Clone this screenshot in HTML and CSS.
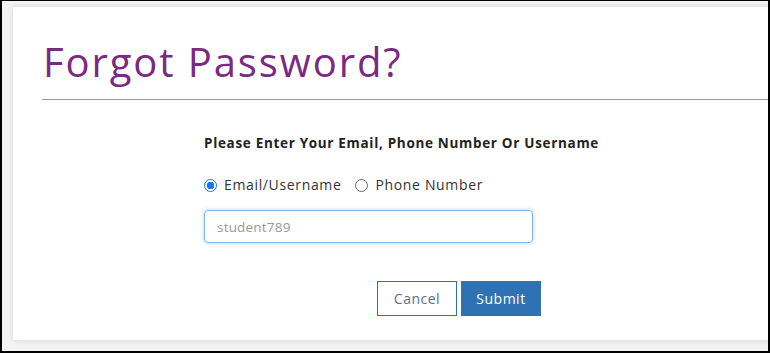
FILE: index.html
```html
<!DOCTYPE html>
<html>
<head>
<meta charset="utf-8">
<link rel="stylesheet" href="styles.css">
</head>
<body>
<div class="frame">
  <div class="card">
    <h1 class="title">Forgot Password?</h1>
    <hr class="rule">
    <form class="form">
      <div class="label">Please Enter Your Email, Phone Number Or Username</div>
      <div class="radios">
        <label class="radio"><span class="dot checked"></span>Email/Username</label>
        <label class="radio"><span class="dot"></span>Phone Number</label>
      </div>
      <div class="input"><span class="placeholder">student789</span></div>
      <div class="actions">
        <button type="button" class="btn cancel">Cancel</button>
        <button type="button" class="btn submit">Submit</button>
      </div>
    </form>
  </div>
</div>
</body>
</html>
```
FILE: styles.css
```css
html, body { margin: 0; padding: 0; }
body { width: 770px; height: 353px; overflow: hidden; font-family: "Open Sans", "Liberation Sans", sans-serif; }
.frame {
  box-sizing: border-box;
  width: 770px; height: 353px;
  border-style: solid; border-color: #000;
  border-width: 1px 2px 2px 2px;
  background: #f3f3f3;
  overflow: hidden;
  padding: 6px 0 0 11px;
}
.card {
  background: #fff;
  width: 800px;
  height: 333px;
  box-shadow: 0 0 6px rgba(0,0,0,0.12);
  padding: 1px 0 0 29px;
  box-sizing: border-box;
}
.title {
  margin: 29px 0 0 1px;
  font-weight: 400;
  font-size: 40px;
  line-height: 50px;
  color: #7a2a82;
  letter-spacing: 1.9px;
}
.rule {
  margin: 12px 0 0 0;
  border: 0;
  border-top: 1px solid #999;
  height: 0;
}
.form {
  margin: 0 0 0 162px;
  padding-top: 34px;
  color: #222;
  font-size: 14px;
}
.label { font-weight: 700; font-size: 13.5px; line-height: 18px; color: #222; letter-spacing: 0.68px; }
.radios { display: flex; gap: 14px; margin-top: 24px; align-items: center; line-height: 18px; }
.radio { display: flex; align-items: center; gap: 7px; color: #333; letter-spacing: 0.65px; }
.dot {
  width: 11px; height: 11px; border-radius: 50%;
  border: 1px solid #666; box-sizing: content-box;
  display: inline-block;
}
.dot.checked { border-color: #1a73e8; background: radial-gradient(circle, #1a73e8 0 3.5px, #fff 4px); }
.input {
  margin-top: 16px;
  width: 329px; height: 33px; box-sizing: border-box;
  border: 1px solid #80b3ea; border-radius: 4px;
  box-shadow: 0 0 4px rgba(80,150,230,0.45);
  display: flex; align-items: center; padding-left: 12px;
}
.placeholder { color: #999; font-size: 13.5px; letter-spacing: 0.2px; }
.actions { display: flex; gap: 4px; margin-top: 38px; margin-left: 173px; }
.btn {
  width: 80px; height: 35px; box-sizing: border-box;
  font-family: inherit; font-size: 14px; border-radius: 0;
  cursor: pointer; letter-spacing: 0.5px;
}
.cancel { background: #fff; border: 1px solid #2f6fb0; color: #5a6f8a; }
.submit { background: #2f72b3; border: 1px solid #2f72b3; color: #fff; }
```
